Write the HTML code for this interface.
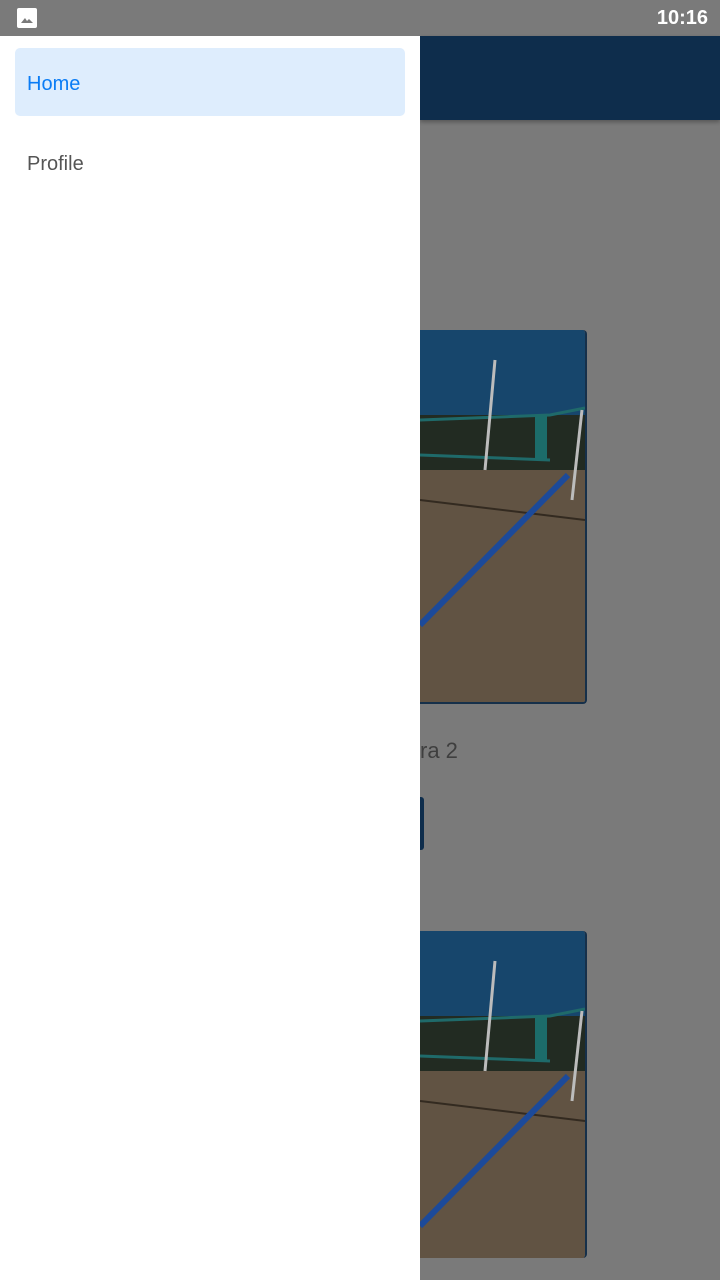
<!DOCTYPE html>
<html><head><style>
body{margin:0;width:720px;height:1280px;overflow:hidden;background:#7a7a7a;position:relative;font-family:"Liberation Sans",sans-serif}
.abs{position:absolute}
.photo{position:absolute;left:420px;width:165px;overflow:hidden;border-radius:0 4px 4px 0;border-right:2px solid #16304a}
</style></head><body>
<div class="abs" style="left:0;top:0;width:720px;height:36px;background:#7a7a7a"></div>
<div class="abs" style="left:17px;top:8px;width:20px;height:20px;background:#fff;border-radius:2px"></div>
<svg class="abs" style="left:17px;top:8px" width="20" height="20"><path d="M4 15 L8 10 L10 13 L12 11 L16 15Z" fill="#7a7a7a"/></svg>
<div class="abs" style="right:12px;top:7px;color:#fff;font-size:20px;font-weight:bold">10:16</div>
<div class="abs" style="left:420px;top:36px;width:300px;height:84px;background:#0e2d4c;box-shadow:0 2px 4px rgba(0,0,0,.3)"></div>

<div class="photo" style="top:330px;height:372px;border-bottom:2px solid #16304a">
<svg width="165" height="372" viewBox="0 0 165 372">
<rect width="165" height="372" fill="#615343"/>
<rect width="165" height="85" fill="#17466c"/>
<rect y="85" width="165" height="55" fill="#222b22"/>
<path d="M0 90 L130 85 L165 78" stroke="#1f6a6a" stroke-width="3" fill="none"/>
<path d="M0 125 L130 130" stroke="#1f6a6a" stroke-width="3" fill="none"/>
<rect x="115" y="85" width="12" height="45" fill="#1c6c6a"/>
<path d="M75 30 L65 140" stroke="#bcbcbc" stroke-width="3"/>
<path d="M162 80 L152 170" stroke="#bcbcbc" stroke-width="3"/>
<path d="M0 170 L165 190" stroke="#332a20" stroke-width="2"/>
<path d="M148 145 L0 295" stroke="#1c4a9a" stroke-width="6"/>
</svg></div>
<div class="abs" style="left:420px;top:738px;font-size:22px;color:#3f3f3f">ra 2</div>
<div class="abs" style="left:420px;top:797px;width:4px;height:53px;background:#0e2d4c;border-radius:0 3px 3px 0"></div>

<div class="photo" style="top:931px;height:327px">
<svg width="165" height="372" viewBox="0 0 165 372">
<rect width="165" height="372" fill="#615343"/>
<rect width="165" height="85" fill="#17466c"/>
<rect y="85" width="165" height="55" fill="#222b22"/>
<path d="M0 90 L130 85 L165 78" stroke="#1f6a6a" stroke-width="3" fill="none"/>
<path d="M0 125 L130 130" stroke="#1f6a6a" stroke-width="3" fill="none"/>
<rect x="115" y="85" width="12" height="45" fill="#1c6c6a"/>
<path d="M75 30 L65 140" stroke="#bcbcbc" stroke-width="3"/>
<path d="M162 80 L152 170" stroke="#bcbcbc" stroke-width="3"/>
<path d="M0 170 L165 190" stroke="#332a20" stroke-width="2"/>
<path d="M148 145 L0 295" stroke="#1c4a9a" stroke-width="6"/>
</svg></div>

<div class="abs" style="left:0;top:36px;width:420px;height:1244px;background:#fff"></div>
<div class="abs" style="left:15px;top:48px;width:390px;height:68px;background:#deedfd;border-radius:5px"></div>
<div class="abs" style="left:27px;top:73px;font-size:20px;color:#0a7cf5">Home</div>
<div class="abs" style="left:27px;top:153px;font-size:20px;color:#555">Profile</div>
</body></html>
